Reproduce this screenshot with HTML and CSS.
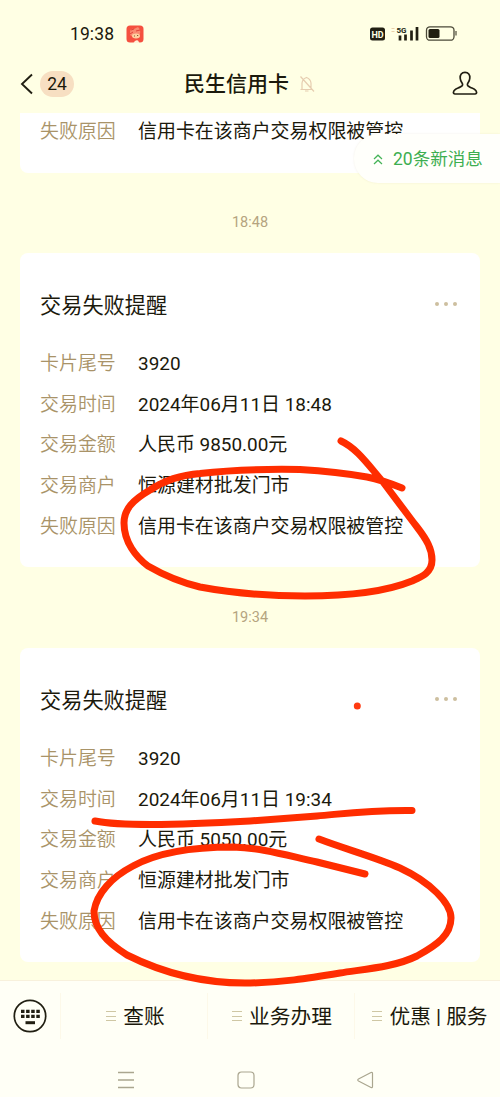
FILE: index.html
```html
<!DOCTYPE html>
<html lang="zh-CN">
<head>
<meta charset="utf-8">
<title>民生信用卡</title>
<link rel="stylesheet" href="styles.css">
</head>
<body>
<div class="phone">
  <header class="header">
    <div class="status">
      <span class="clock">19:38</span>
      <svg class="app-badge" width="18" height="18" viewBox="0 0 18 18">
        <rect x=".5" y=".5" width="17" height="17" rx="3.5" fill="#f5503f"/>
        <path d="M4 8Q4 3 8 4L12 2Q15 5 14 9L11 11Q7 13 4 10Z" fill="#f98a70"/>
        <path d="M5 5l3-1M4 9l3-2M10 6l4-1" stroke="#e2443a" stroke-width="1"/>
        <ellipse cx="10" cy="11" rx="4" ry="2.4" fill="#ffd0a0"/>
        <path d="M8 11h1M11 10.500h1.200" stroke="#8b5a30" stroke-width="1.200"/>
        <path d="M7.500 18Q9 14.500 12 15.500L13.500 18Z" fill="#fff3d8"/>
      </svg>
      <svg class="status-icons" width="90" height="18" viewBox="0 0 90 18">
        <rect x="2" y="2.500" width="15" height="13" rx="2.500" fill="#211f12"/>
        <text class="hd" x="9.500" y="12.500" text-anchor="middle">HD</text>
        <path d="M23.500 3.500h3M23.500 6.500h3" stroke="#e9cfaa" stroke-width="1"/>
        <text class="fiveg" x="28.500" y="7.800">5G</text>
        <path d="M32 10.500v5M37.500 9.500v6M43.500 5.500v10M49 2v13.500" stroke="#211f12" stroke-width="2.700"/>
        <rect x="58.500" y="1.800" width="27.500" height="13.400" rx="3.500" fill="none" stroke="#4b4938" stroke-width="1.300"/>
        <rect x="60.500" y="4" width="11" height="9" rx="1.500" fill="#211f12"/>
        <path d="M88 6v4.500" stroke="#5b5946" stroke-width="1.300"/>
      </svg>
    </div>
    <div class="titlebar">
      <svg class="back" width="14" height="22" viewBox="0 0 14 22"><path d="M12 1.500L2 11l10 9.500" fill="none" stroke="#211f12" stroke-width="1.900"/></svg>
      <span class="unread">24</span>
      <h1 class="title">民生信用卡</h1>
      <svg class="muted" width="16" height="18" viewBox="0 0 16 18" fill="none" stroke="#e6cdb0" stroke-width="1.200">
        <path d="M1.500 14.500h12M3 14.500V8Q3.500 4 7.500 2.500Q11.500 4 12 8v6.500M6 16h3.500M1.500 1.500L15 16.500"/>
      </svg>
      <svg class="profile" width="26" height="25" viewBox="0 0 26 25"><path d="M13 1.300C9.600 1.300 7.900 4 8.200 7.200C8.400 10 9.500 11.200 10.400 12.600C11.300 14.500 9.500 15.500 7.500 16.400C4 18 1.700 18.600 1.500 21.200Q1.300 23 3 23H23Q24.700 23 24.500 21.200C24.300 18.600 22 18 18.500 16.400C16.500 15.500 14.700 14.500 15.600 12.600C16.500 11.200 17.600 10 17.800 7.200C18.100 4 16.400 1.300 13 1.300Z" fill="none" stroke="#211f12" stroke-width="1.700" stroke-linejoin="round"/></svg>
    </div>
  </header>

  <main class="chat">
    <section class="card card-cut">
      <dl class="rows"><div class="row"><dt>失败原因</dt><dd>信用卡在该商户交易权限被管控</dd></div></dl>
    </section>
    <time class="stamp">18:48</time>
    <section class="card">
      <div class="card-head"><h2>交易失败提醒</h2><span class="more"><i></i><i></i><i></i></span></div>
      <dl class="rows">
        <div class="row"><dt>卡片尾号</dt><dd>3920</dd></div>
        <div class="row"><dt>交易时间</dt><dd>2024年06月11日 18:48</dd></div>
        <div class="row"><dt>交易金额</dt><dd>人民币 9850.00元</dd></div>
        <div class="row"><dt>交易商户</dt><dd>恒源建材批发门市</dd></div>
        <div class="row"><dt>失败原因</dt><dd>信用卡在该商户交易权限被管控</dd></div>
      </dl>
    </section>
    <time class="stamp stamp-late">19:34</time>
    <section class="card">
      <div class="card-head"><h2>交易失败提醒</h2><span class="more"><i></i><i></i><i></i></span></div>
      <dl class="rows">
        <div class="row"><dt>卡片尾号</dt><dd>3920</dd></div>
        <div class="row"><dt>交易时间</dt><dd>2024年06月11日 19:34</dd></div>
        <div class="row"><dt>交易金额</dt><dd>人民币 5050.00元</dd></div>
        <div class="row"><dt>交易商户</dt><dd>恒源建材批发门市</dd></div>
        <div class="row"><dt>失败原因</dt><dd>信用卡在该商户交易权限被管控</dd></div>
      </dl>
    </section>
    <div class="new-messages">
      <svg width="10" height="11" viewBox="0 0 10 11"><path d="M1 5l4-3.800L9 5M1 10l4-3.800L9 10" fill="none" stroke="#45b358" stroke-width="1.200"/></svg>
      <span>20条新消息</span>
    </div>
  </main>

  <footer class="footer">
    <nav class="menu">
      <div class="keyboard">
        <svg width="34" height="34" viewBox="0 0 34 34">
          <circle cx="17" cy="17" r="15.700" fill="none" stroke="#211f12" stroke-width="1.700"/>
          <path d="M8 12.300h19M8 17.300h19" stroke="#211f12" stroke-width="3.300" stroke-dasharray="3.500 1.600"/>
          <path d="M12.500 23.700h9.500" stroke="#211f12" stroke-width="3"/>
        </svg>
      </div>
      <div class="item"><i class="lines"></i><span>查账</span></div>
      <div class="item"><i class="lines"></i><span>业务办理</span></div>
      <div class="item item-last"><i class="lines"></i><span>优惠 | 服务</span></div>
    </nav>
    <div class="system">
      <svg width="18" height="18" viewBox="0 0 18 18"><path d="M1 1.500h16M1 9h16M1 16.500h16" stroke="#aaa68f" stroke-width="1.300"/></svg>
      <svg width="18" height="18" viewBox="0 0 18 18"><rect x="1" y="1" width="16" height="16" rx="3.500" fill="none" stroke="#aaa68f" stroke-width="1.200"/></svg>
      <svg width="18" height="18" viewBox="0 0 18 18"><path d="M14 1.500L1.500 8Q0 9 1.500 10L14 16.500Q15.500 17 15.500 15.500V2.500Q15.500 1 14 1.500Z" fill="none" stroke="#aaa68f" stroke-width="1.200"/></svg>
    </div>
  </footer>

  <svg class="ink" width="500" height="1097" viewBox="0 0 500 1097">
    <path d="M341 441C356 448 366 462 383 482C398 502 407 514 417 527C427 540 432 549 432 560C432 573 421 577 412 581C390 590 352 596 305 596C270 596 232 593 200 587C175 581 160 573 148 566C136 557 124 542 124 523C124 509 133 500 150 490C165 480 180 475 200 473.500C230 470 270 469 300 469.500C325 471 350 474 367 477C382 480 392 484 402 488"/>
    <path d="M95 821C120 826 180 825 250 821L317 816C350 813 370 810 412 810.500"/>
    <path d="M319 839C345 849 375 857 400 868C430 882 451 903 451 918C451 935 437 945 417 956C395 967 365 969 340 973C310 978 280 983 245 983C205 983 165 974 127 955C105 941 94 928 94 911C97 893 112 877 133 866C160 851 195 847 233 847C262 848 285 855 317 862L365 874"/>
    <circle cx="357.300" cy="706" r="3.500"/>
  </svg>
</div>
</body>
</html>
```

FILE: styles.css
```css
* { box-sizing: border-box; }

body {
  margin: 0;
  background: #ffffe4;
  color: #1b190c;
  font-family: Roboto, "Noto Sans CJK SC", sans-serif;
}

h1, h2, dl, dd { margin: 0; font-weight: 400; }
svg { display: block; flex: none; }

.phone {
  position: relative;
  display: flex;
  flex-direction: column;
  width: 500px;
  height: 1097px;
  overflow: hidden;
}

.header { height: 113px; flex: none; }

.status {
  display: flex;
  align-items: center;
  height: 56px;
  padding: 11px 42px 0 70px;
}
.clock { width: 56px; font-size: 17.5px; font-weight: 450; letter-spacing: .1px; }
.status-icons { margin-left: auto; }
.hd { font-size: 9px; font-weight: 700; fill: #ffffe4; }
.fiveg { font-size: 8px; font-weight: 700; fill: #211f12; }

.titlebar {
  display: flex;
  align-items: center;
  height: 55px;
  padding: 0 22px 0 20px;
}
.unread {
  width: 34px;
  height: 26px;
  margin-left: 6px;
  border-radius: 13px;
  background: #f7dfc2;
  font-size: 17.5px;
  font-weight: 450;
  line-height: 26px;
  text-align: center;
}
.title {
  margin-left: 110px;
  font-size: 21px;
  font-weight: 500;
  line-height: 30px;
  white-space: nowrap;
}
.muted { margin-left: 10px; }
.profile { margin-left: auto; }

.chat { position: relative; flex: 1; overflow: hidden; }

.card {
  height: 314px;
  margin: 0 20px;
  padding: 37.5px 20px 0;
  border-radius: 8px;
  background: #fff;
}
.card-cut { height: 60px; padding-top: 1px; border-radius: 0 0 8px 8px; }
.card-cut .row { height: 36px; }
.card-head {
  display: flex;
  justify-content: space-between;
  align-items: center;
  height: 53px;
  padding-bottom: 23px;
}
.card-head h2 { font-size: 21.2px; line-height: 30px; }
.more { display: flex; gap: 5px; padding: 0 3px 3px 0; }
.more i { width: 4px; height: 4px; border-radius: 50%; background: #cdbf9f; }

.row {
  display: flex;
  align-items: center;
  height: 40.75px;
  font-size: 18.95px;
  line-height: 28px;
  white-space: nowrap;
}
.row dt { width: 98px; color: #a99368; font-weight: 350; }

.stamp {
  display: block;
  height: 80px;
  padding-top: 40px;
  color: #b5a47f;
  font-size: 14.5px;
  line-height: 20px;
  text-align: center;
}
.stamp-late { height: 81px; padding-top: 41px; }

.new-messages {
  position: absolute;
  top: 21px;
  right: 0;
  display: flex;
  align-items: center;
  gap: 10px;
  width: 146px;
  height: 49px;
  padding: 1px 0 0 19px;
  border-radius: 24px 0 0 24px;
  background: #fffffb;
  box-shadow: 0 0 2px rgba(160, 140, 80, .15);
  color: #3dae50;
  font-size: 17.5px;
  line-height: 26px;
  white-space: nowrap;
}

.footer {
  flex: none;
  height: 117px;
  border-top: 1px solid #f8f1dc;
  background: #fffff6;
}
.menu { display: flex; align-items: center; height: 70px; }
.keyboard { width: 60px; padding-left: 13px; }
.item {
  display: flex;
  justify-content: center;
  align-items: center;
  gap: 7px;
  width: 147px;
  height: 46px;
  border-left: 1px solid #fdf9e9;
  font-size: 20.7px;
  line-height: 30px;
  white-space: nowrap;
}
.item span { padding-top: 2px; }
.item:nth-child(2) { padding-left: 3px; }
.item:nth-child(3) { padding-left: 2px; }
.item-last { width: 146px; padding-left: 5px; }
.lines {
  width: 10px;
  height: 10px;
  border: solid #cfc7a4;
  border-width: 1px 0;
  background: linear-gradient(#cfc7a4, #cfc7a4) center / 100% 1px no-repeat;
}
.system { display: flex; gap: 102px; padding: 20px 0 0 117px; }

.ink {
  position: absolute;
  inset: 0;
  fill: none;
  stroke: #ff2d00;
  stroke-width: 7;
  stroke-linecap: round;
  pointer-events: none;
}
.ink circle { fill: #ff3a10; stroke: none; }
```
